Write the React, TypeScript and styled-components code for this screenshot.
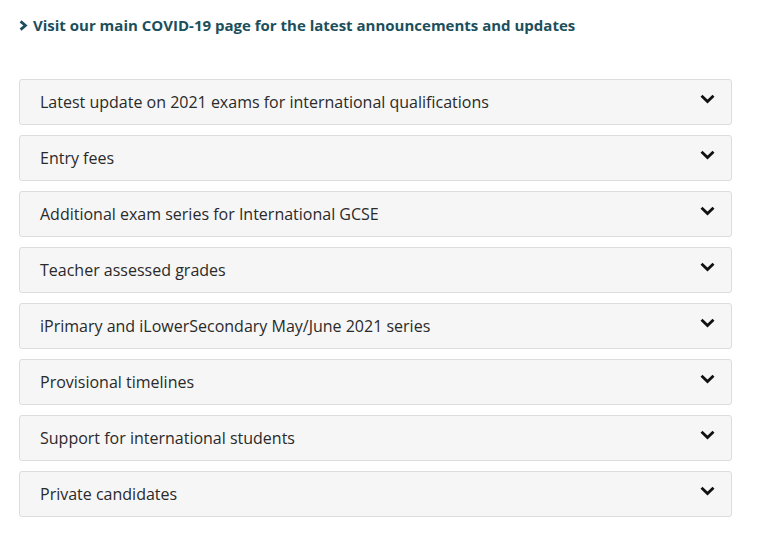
import React from 'react';
import styled, { createGlobalStyle } from 'styled-components';

const GlobalStyle = createGlobalStyle`
    body {
        margin: 0;
        background: #ffffff;
        font-family: "Open Sans", "Liberation Sans", sans-serif;
    }
`;

const Page = styled.div`
    padding: 14px 28px 20px 19px;
`;

const TopLink = styled.a`
    display: flex;
    align-items: center;
    gap: 5px;
    font-size: 15px;
    font-weight: 700;
    color: #1c4f5c;
    text-decoration: none;
    line-height: 22px;
`;

const List = styled.div`
    margin-top: 43px;
    display: flex;
    flex-direction: column;
    gap: 10px;
`;

const Panel = styled.div`
    display: flex;
    align-items: center;
    justify-content: space-between;
    height: 44px;
    padding: 0 16px 0 20px;
    background: #f6f6f6;
    border: 1px solid #dcdcdc;
    border-radius: 3px;
`;

const Title = styled.span`
    font-size: 16px;
    color: #2a2a2a;
`;

const Chevron = styled.svg`
    margin-top: -6px;
`;

const items: Array<string> = [
    'Latest update on 2021 exams for international qualifications',
    'Entry fees',
    'Additional exam series for International GCSE',
    'Teacher assessed grades',
    'iPrimary and iLowerSecondary May/June 2021 series',
    'Provisional timelines',
    'Support for international students',
    'Private candidates',
];

const App = () => {
    return (
        <Page>
            <GlobalStyle />
            <TopLink href="#">
                <svg width="9" height="11" viewBox="0 0 9 11">
                    <path d="M1.6 1.4 L6.4 5.5 L1.6 9.6" fill="none" stroke="#1c4f5c" strokeWidth="2.8" />
                </svg>
                Visit our main COVID-19 page for the latest announcements and updates
            </TopLink>
            <List>
                {items.map((item) => (
                    <Panel key={item}>
                        <Title>{item}</Title>
                        <Chevron width="15" height="10" viewBox="0 0 15 10">
                            <path d="M1.5 1.8 L7.5 7.6 L13.5 1.8" fill="none" stroke="#111" strokeWidth="2.8" />
                        </Chevron>
                    </Panel>
                ))}
            </List>
        </Page>
    );
};

export default App;
